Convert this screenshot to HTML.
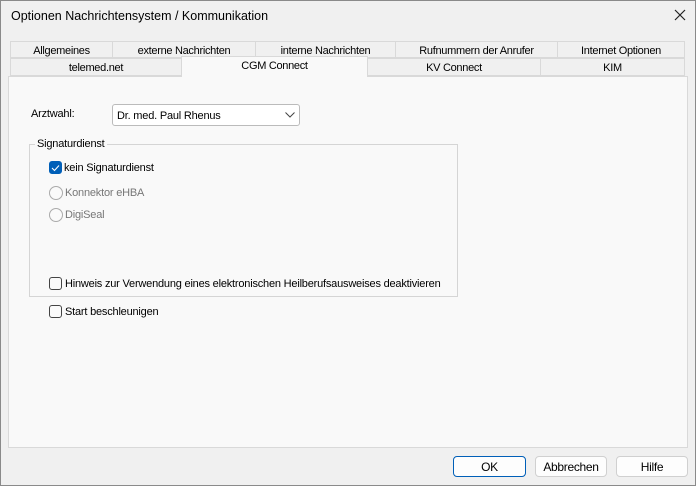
<html><head><style>
body{margin:0;width:696px;height:486px;background:#f0f0f0;font-family:"Liberation Sans",sans-serif;font-size:11px;letter-spacing:-0.2px;color:#000;position:relative;overflow:hidden}
.a{position:absolute}
.win{left:0;top:0;width:694px;height:484px;border:1px solid #8a8a8a}
.tab{position:absolute;height:17px;border:1px solid #d9d9d9;background:#f0f0f0;text-align:center;line-height:18px;font-size:11px;box-sizing:border-box;letter-spacing:-0.3px}
.cb{position:absolute;width:11px;height:11px;border:1px solid #444;border-radius:3px;background:#fafafa}
.rb{position:absolute;width:12px;height:12px;border:1px solid #aaa;border-radius:50%;background:#fafafa}
.btn{position:absolute;height:21px;border:1px solid #d0d0d0;border-radius:4px;background:#fdfdfd;text-align:center;line-height:20px;box-sizing:border-box;font-size:12px;letter-spacing:-0.3px}
</style></head><body>
<div class="a win"></div>
<div class="a" style="left:11px;top:9px;font-size:12.5px;letter-spacing:0">Optionen Nachrichtensystem / Kommunikation</div>
<svg class="a" style="left:674px;top:9px" width="12" height="12"><path d="M1 1L11 11M11 1L1 11" stroke="#222" stroke-width="1.2"/></svg>
<div class="a" style="left:8px;top:76px;width:678px;height:370px;background:#f9f9f9;border:1px solid #d9d9d9"></div>
<div class="tab" style="left:10px;top:41px;width:103px">Allgemeines</div>
<div class="tab" style="left:112px;top:41px;width:144px">externe Nachrichten</div>
<div class="tab" style="left:255px;top:41px;width:141px">interne Nachrichten</div>
<div class="tab" style="left:395px;top:41px;width:163px">Rufnummern der Anrufer</div>
<div class="tab" style="left:557px;top:41px;width:128px">Internet Optionen</div>
<div class="tab" style="left:10px;top:58px;width:172px;height:18px">telemed.net</div>
<div class="tab" style="left:181px;top:56px;width:187px;height:21px;background:#f9f9f9;border-bottom:none;line-height:19px">CGM Connect</div>
<div class="tab" style="left:367px;top:58px;width:174px;height:18px">KV Connect</div>
<div class="tab" style="left:540px;top:58px;width:145px;height:18px">KIM</div>
<div class="a" style="left:31px;top:108px">Arztwahl:</div>
<div class="a" style="left:112px;top:104px;width:186px;height:20px;border:1px solid #bbb;border-radius:3px;background:#fff"><span class="a" style="left:4px;top:5px">Dr. med. Paul Rhenus</span>
<svg class="a" style="left:172px;top:7px" width="10" height="6"><path d="M0.5 0.5L5 5L9.5 0.5" stroke="#444" fill="none"/></svg></div>
<div class="a" style="left:29px;top:144px;width:427px;height:151px;border:1px solid #d5d5d5"></div>
<div class="a" style="left:35px;top:138px;background:#f9f9f9;padding:0 2px">Signaturdienst</div>
<div class="cb" style="left:49px;top:161px;background:#005fb8;border-color:#005fb8"><svg class="a" style="left:1px;top:2px" width="9" height="8"><path d="M1 4L3.5 6.5L8 1.5" stroke="#fff" fill="none" stroke-width="1.1"/></svg></div>
<div class="a" style="left:64px;top:162px">kein Signaturdienst</div>
<div class="rb" style="left:49px;top:186px"></div>
<div class="a" style="left:65px;top:187px;color:#777">Konnektor eHBA</div>
<div class="rb" style="left:49px;top:208px"></div>
<div class="a" style="left:65px;top:209px;color:#777">DigiSeal</div>
<div class="cb" style="left:49px;top:277px"></div>
<div class="a" style="left:65px;top:278px">Hinweis zur Verwendung eines elektronischen Heilberufsausweises deaktivieren</div>
<div class="cb" style="left:49px;top:305px"></div>
<div class="a" style="left:65px;top:306px">Start beschleunigen</div>
<div class="btn" style="left:453px;top:456px;width:73px;border:1px solid #005fb8">OK</div>
<div class="btn" style="left:535px;top:456px;width:72px">Abbrechen</div>
<div class="btn" style="left:616px;top:456px;width:72px">Hilfe</div>
</body></html>
